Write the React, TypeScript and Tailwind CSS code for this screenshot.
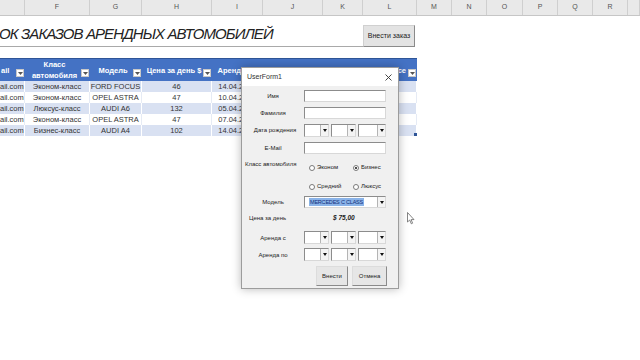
import React from "react";

const colW = [25, 65, 52, 70, 51, 60, 40, 54, 35, 35, 36, 35, 35, 35, 12];
const colL = ["", "F", "G", "H", "I", "J", "K", "L", "M", "N", "O", "P", "Q", "R", ""];

const tableCols = [
  { w: 25, h: "ail", align: "left", arrow: true },
  { w: 65, h: "Класс\nавтомобиля", align: "center", arrow: true },
  { w: 52, h: "Модель", align: "center", arrow: true },
  { w: 70, h: "Цена за день $", align: "center", arrow: true },
  { w: 51, h: "Аренда с", align: "center", arrow: true },
  { w: 60, h: "", align: "center", arrow: true },
  { w: 40, h: "", align: "center", arrow: true },
  { w: 54, h: "В сервисе", align: "center", arrow: true },
];

const rows = [
  ["ail.com", "Эконом-класс", "FORD FOCUS", "46", "14.04.2024", "", "", ""],
  ["ail.com", "Эконом-класс", "OPEL ASTRA", "47", "10.04.2024", "", "", ""],
  ["ail.com", "Люксус-класс", "AUDI A6", "132", "05.04.2024", "", "", ""],
  ["ail.com", "Эконом-класс", "OPEL ASTRA", "47", "07.04.2024", "", "", ""],
  ["ail.com", "Бизнес-класс", "AUDI A4", "102", "14.04.2024", "", "", ""],
];

function HeaderArrow() {
  return (
    <div className="absolute right-[1px] bottom-[4px] w-[8px] h-[8px] bg-white border border-[#c8c8c8] flex items-center justify-center">
      <svg width="5" height="3" viewBox="0 0 5 3">
        <polygon points="0,0 5,0 2.5,3" fill="#555" />
      </svg>
    </div>
  );
}

function TextBox() {
  return <div className="w-[82px] h-[12px] bg-white border border-[#8c8c8c] border-r-[#d8d8d8] border-b-[#d8d8d8]" />;
}

function SmallCombo({ w }: { w: number }) {
  return (
    <div className="h-[13px] bg-white border border-[#8c8c8c] border-r-[#d8d8d8] border-b-[#d8d8d8] flex justify-end" style={{ width: w }}>
      <div className="w-[8px] h-full border-l border-[#b4b4b4] bg-[#f4f4f4] flex items-center justify-center">
        <svg width="4" height="3" viewBox="0 0 4 3">
          <polygon points="0,0 4,0 2,3" fill="#111" />
        </svg>
      </div>
    </div>
  );
}

function DateCombos() {
  return (
    <div className="flex gap-[2px]">
      <SmallCombo w={25} />
      <SmallCombo w={25} />
      <SmallCombo w={28} />
    </div>
  );
}

function Radio({ label, checked }: { label: string; checked?: boolean }) {
  return (
    <div className="flex items-center gap-[2px] w-[44px]">
      <div className="w-[6px] h-[6px] rounded-full border border-[#7a7a7a] bg-white flex items-center justify-center">
        {checked && <div className="w-[2px] h-[2px] rounded-full bg-[#111]" />}
      </div>
      <span>{label}</span>
    </div>
  );
}

function Label({ children }: { children: React.ReactNode }) {
  return <div className="w-[62px] shrink-0 text-center leading-none">{children}</div>;
}

export default function App() {
  return (
    <div className="relative w-[640px] h-[360px] bg-white overflow-hidden" style={{ fontFamily: '"Liberation Sans", Arial, sans-serif' }}>
      {/* column letters */}
      <div className="flex h-[16px] bg-[#e9e9e9] border-b border-[#c6c6c6]">
        {colW.map((w, i) => (
          <div key={i} className="h-full border-r border-[#cfcfcf] flex items-center justify-center text-[7px] text-[#555]" style={{ width: w }}>
            {colL[i]}
          </div>
        ))}
      </div>

      {/* title row */}
      <div className="flex h-[31px]">
        <div className="w-[363px] h-full border-b border-[#a9a9a9] flex items-center pt-[7px] overflow-hidden">
          <span className="italic text-[15px] tracking-[-0.9px] text-[#222] whitespace-nowrap -ml-[1px]">ОК ЗАКАЗОВ АРЕНДНЫХ АВТОМОБИЛЕЙ</span>
        </div>
        <div className="w-[54px] h-full flex items-end">
          <div className="w-[52px] h-[22px] bg-[#e3e3e3] border border-[#d0d0d0] border-r-[#8a8a8a] border-b-[#8a8a8a] flex items-center justify-center text-[7px] text-[#222]">
            Внести заказ
          </div>
        </div>
      </div>

      <div className="h-[11px]" />

      {/* table */}
      <div className="relative w-[417px]">
        <div className="flex h-[23px] bg-[#4472c4] border-t border-[#2f5597]">
          {tableCols.map((c, i) => (
            <div key={i} className={`relative h-full flex items-center ${c.align === "left" ? "justify-start pl-[1px]" : "justify-center pr-[6px]"} text-white font-bold text-[7.5px] leading-[11px] whitespace-pre text-center`} style={{ width: c.w }}>
              {c.h}
              {c.arrow && <HeaderArrow />}
            </div>
          ))}
        </div>
        {rows.map((r, ri) => (
          <div key={ri} className={`flex h-[11px] ${ri % 2 === 0 ? "bg-[#d9e1f2]" : "bg-white"}`}>
            {r.map((v, ci) => (
              <div key={ci} className={`h-full flex items-center overflow-hidden whitespace-nowrap text-[7.5px] text-[#333] border-r ${ri % 2 === 0 ? "border-white" : "border-[#e6ebf5]"} ${ci === 0 ? "justify-start" : "justify-center"}`} style={{ width: tableCols[ci].w }}>
                {v}
              </div>
            ))}
          </div>
        ))}
        <div className="absolute right-0 bottom-0 w-[3px] h-[3px] bg-[#2f5597]" />
      </div>

      {/* UserForm overlay window */}
      <div className="absolute left-[241px] top-[67px] w-[158px] h-[222px] border border-[#9c9c9c] bg-[#f0f0f0] shadow-[0_0_9px_rgba(0,0,0,0.28)] flex flex-col text-[6px] text-[#222]">
        <div className="h-[18px] bg-white flex items-center justify-between pl-[5px] pr-[6px]">
          <span className="text-[7px] text-[#333]">UserForm1</span>
          <svg width="7" height="7" viewBox="0 0 7 7">
            <path d="M0.5 0.5 L6.5 6.5 M6.5 0.5 L0.5 6.5" stroke="#333" strokeWidth="0.9" />
          </svg>
        </div>
        <div className="flex-1 flex flex-col">
          <div className="flex items-center mt-[4px] h-[12px]">
            <Label>Имя</Label>
            <TextBox />
          </div>
          <div className="flex items-center mt-[4px] h-[13px]">
            <Label>Фамилия</Label>
            <TextBox />
          </div>
          <div className="flex items-start mt-[5px] h-[14px]">
            <Label><div className="pt-[3px] pl-[4px]">Дата рождения</div></Label>
            <DateCombos />
          </div>
          <div className="flex items-center mt-[4px] h-[12px]">
            <Label>E-Mail</Label>
            <TextBox />
          </div>
          <div className="flex mt-[6px]">
            <div className="w-[62px] shrink-0 pl-[3px] pt-[1px] leading-none whitespace-nowrap">Класс автомобиля</div>
            <div className="flex flex-col pl-[5px] gap-[10px] pt-[3px]">
              <div className="flex">
                <Radio label="Эконом" />
                <Radio label="Бизнес" checked />
              </div>
              <div className="flex">
                <Radio label="Средний" />
                <Radio label="Люксус" />
              </div>
            </div>
          </div>
          <div className="flex items-center mt-[5px] h-[12px]">
            <Label>Модель</Label>
            <div className="w-[82px] h-[12px] bg-white border border-[#8c8c8c] border-r-[#d8d8d8] border-b-[#d8d8d8] flex items-center justify-between">
              <span className="ml-[4px] bg-[#8ab3e8] text-[#13307c] text-[5.5px] leading-[8px] px-[1px] tracking-[-0.2px]">MERCEDES C CLASS</span>
              <div className="w-[8px] h-full border-l border-[#b4b4b4] bg-[#f4f4f4] flex items-center justify-center">
                <svg width="4" height="3" viewBox="0 0 4 3">
                  <polygon points="0,0 4,0 2,3" fill="#111" />
                </svg>
              </div>
            </div>
          </div>
          <div className="flex items-center mt-[6px] h-[8px]">
            <div className="w-[62px] shrink-0 pl-[7px] leading-none">Цена за день</div>
            <div className="ml-[29px] font-bold italic text-[6.5px]">$ 75,00</div>
          </div>
          <div className="flex items-center mt-[9px] h-[13px]">
            <Label>Аренда с</Label>
            <DateCombos />
          </div>
          <div className="flex items-center mt-[4px] h-[13px]">
            <Label>Аренда по</Label>
            <DateCombos />
          </div>
          <div className="flex mt-[5px] h-[20px]">
            <div className="w-[62px] shrink-0" />
            <div className="ml-[12px] w-[32px] h-full bg-[#e6e6e6] border border-[#dcdcdc] border-r-[#8a8a8a] border-b-[#8a8a8a] flex items-center justify-center">Внести</div>
            <div className="ml-[4px] w-[35px] h-full bg-[#e6e6e6] border border-[#dcdcdc] border-r-[#8a8a8a] border-b-[#8a8a8a] flex items-center justify-center">Отмена</div>
          </div>
        </div>
      </div>

      {/* mouse cursor */}
      <svg className="absolute left-[407px] top-[212px]" width="8" height="13" viewBox="0 0 8 13">
        <path d="M0.5 0.5 L0.5 10 L2.7 8 L4.3 11.8 L5.6 11.2 L4.1 7.6 L7 7.6 Z" fill="#fff" stroke="#666" strokeWidth="0.8" />
      </svg>
    </div>
  );
}
